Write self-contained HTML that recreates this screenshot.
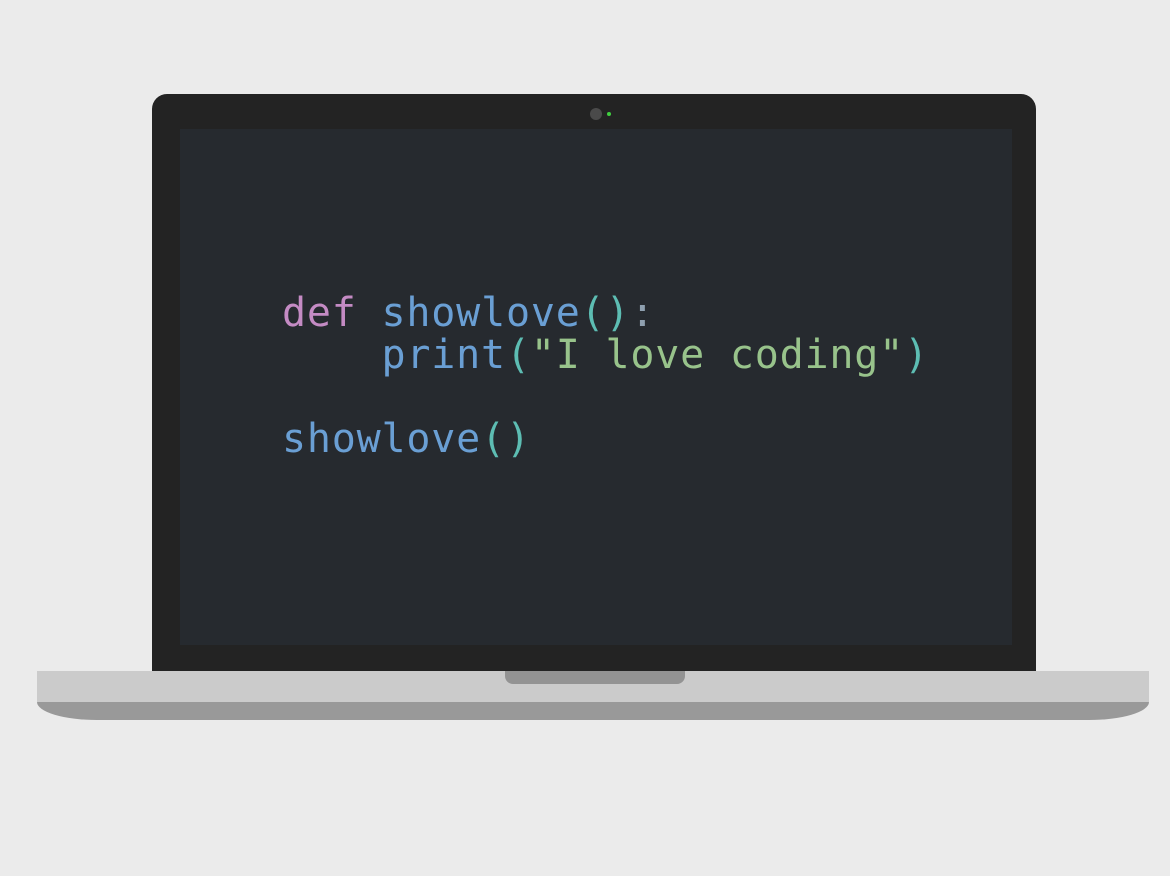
<!DOCTYPE html>
<html><head><meta charset="utf-8"><style>
html,body{margin:0;padding:0;}
body{width:1170px;height:876px;background:#ebebeb;position:relative;overflow:hidden;}
.lid{position:absolute;left:152px;top:94px;width:884px;height:577px;background:#232323;border-radius:15px 15px 0 0;}
.screen{position:absolute;left:180px;top:129px;width:832px;height:516px;background:#262a2f;}
.cam{position:absolute;left:590px;top:108px;width:12px;height:12px;border-radius:50%;background:#4a4a4a;}
.led{position:absolute;left:607px;top:112px;width:4px;height:4px;border-radius:50%;background:#3fcf3f;}
.base{position:absolute;left:37px;top:671px;width:1112px;height:31px;background:#cbcbcb;}
.bottom{position:absolute;left:37px;top:702px;width:1112px;height:18px;background:#999;border-radius:0 0 60px 60px/0 0 18px 18px;}
.notch{position:absolute;left:505px;top:671px;width:180px;height:13px;background:#939393;border-radius:0 0 8px 8px;}
pre{position:absolute;left:282px;top:292px;margin:0;font-family:"DejaVu Sans Mono","Liberation Mono",monospace;font-size:40px;line-height:42px;letter-spacing:0.8px;color:#6a9fd4;}
.k{color:#c48bc4}.p{color:#5dbdb3}.s{color:#98c38b}.c{color:#8fa0b0}
</style></head><body>
<div class="lid"></div>
<div class="screen"></div>
<div class="cam"></div><div class="led"></div>
<div class="base"></div><div class="bottom"></div><div class="notch"></div>
<pre><span class="k">def</span> showlove<span class="p">()</span><span class="c">:</span>
    print<span class="p">(</span><span class="s">"I love coding"</span><span class="p">)</span>

showlove<span class="p">()</span></pre>
</body></html>
